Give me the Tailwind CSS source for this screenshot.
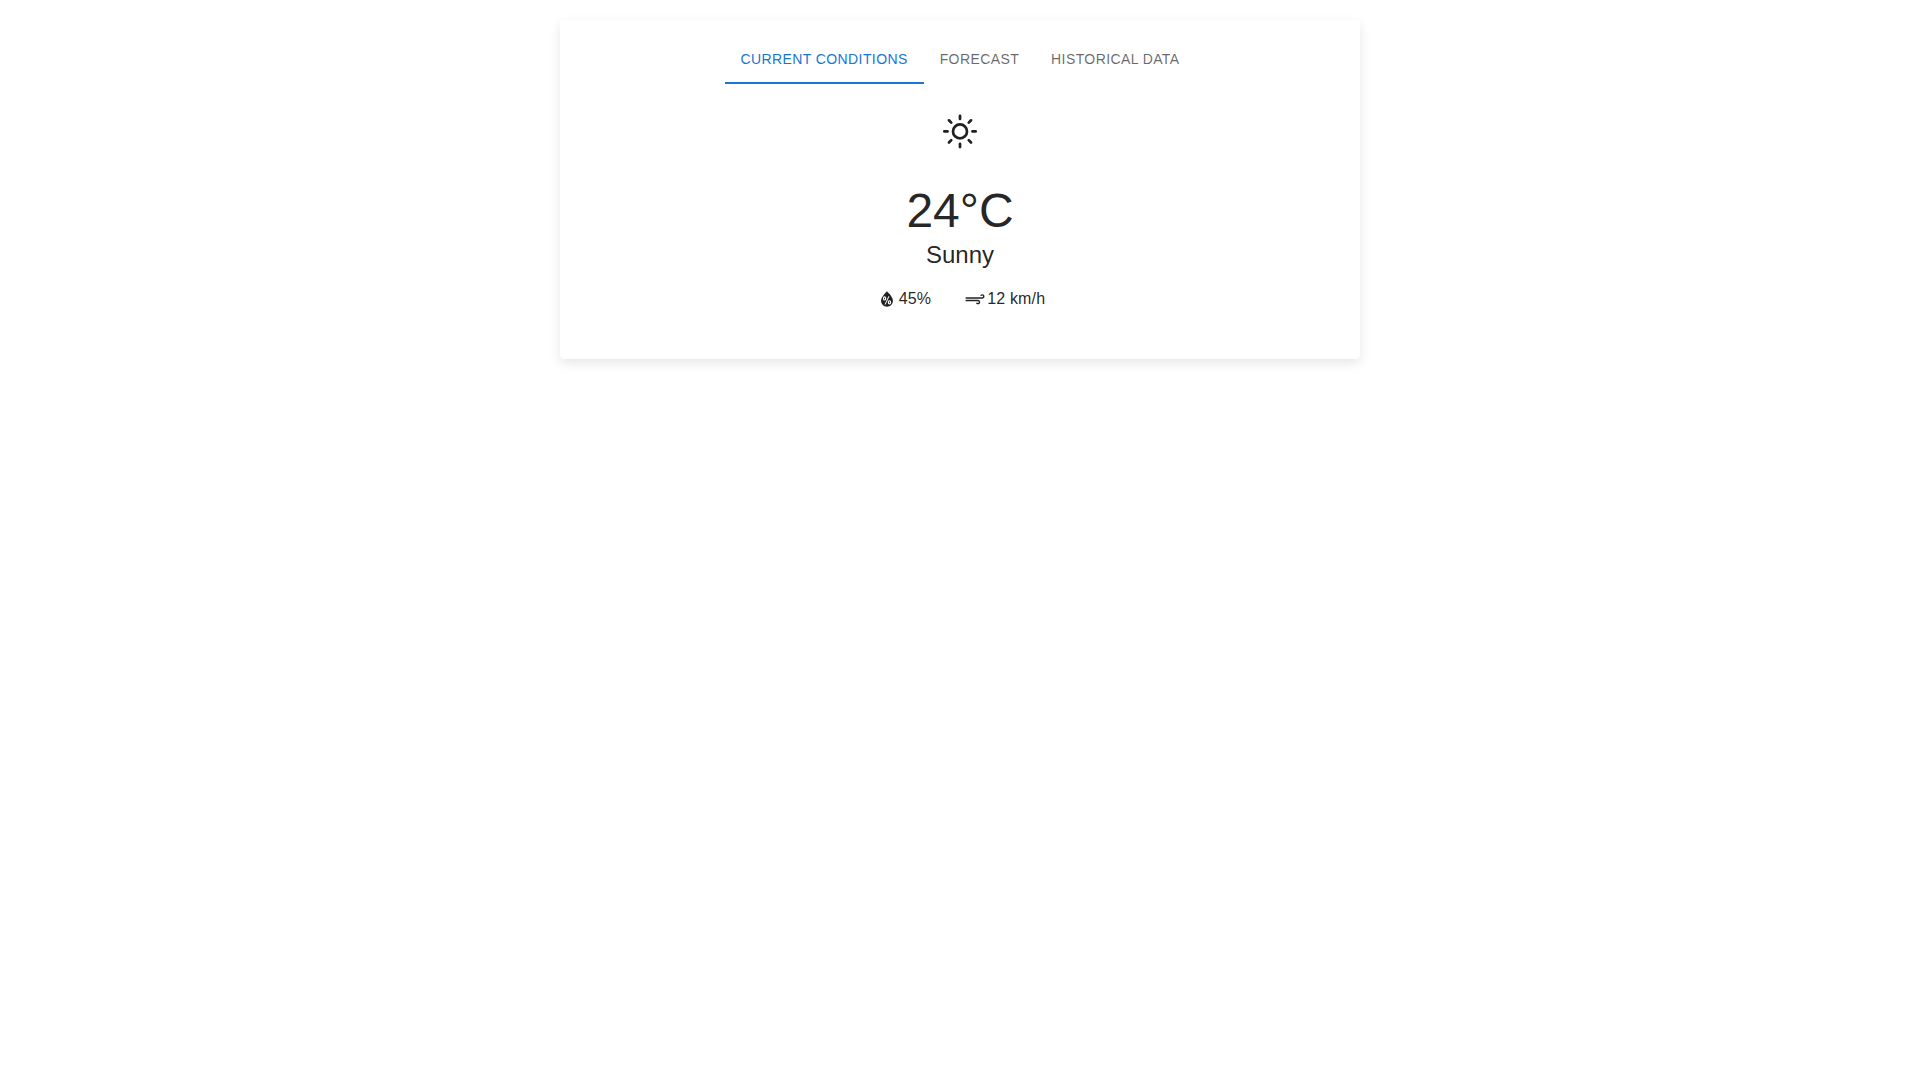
<!DOCTYPE html>
<html lang="en">
<head>
  <meta charset="UTF-8" />
  <meta name="viewport" content="width=device-width, initial-scale=1.0" />
  <title>Weather</title>
  <script src="https://cdn.jsdelivr.net/npm/@tailwindcss/browser@4"></script>
</head>
<body class="min-h-screen pt-5 bg-white font-['Liberation_Sans',Arial,sans-serif] text-black/87 antialiased">
  <div class="w-[800px] h-[339px] mx-auto p-4 rounded bg-white shadow-[0_4px_12px_rgba(0,0,0,0.1)]">

    <!-- Tabs -->
    <div class="flex justify-center h-12 text-sm leading-[17.5px] tracking-[0.02857em] text-black/60">
      <button class="px-4 border-b-2 border-[#1976d2] text-[#1976d2] pt-0.5">CURRENT CONDITIONS</button>
      <button class="px-4">FORECAST</button>
      <button class="px-4">HISTORICAL DATA</button>
    </div>

    <!-- Current conditions -->
    <div class="flex flex-col items-center pt-6">
      <svg class="size-12" viewBox="0 0 30 30" fill="none" stroke="currentColor" stroke-width="1.7" stroke-linecap="round">
        <circle cx="15" cy="14.62" r="4.37" />
        <path d="M5.22 14.62h2M22.78 14.62h2M15 4.86v2M15 22.4v2M8.1 7.7l1.43 1.44M20.47 20.1l1.43 1.44M8.1 21.54l1.43-1.44M20.47 9.14l1.43-1.44" />
      </svg>
      <h1 class="mt-[27px] text-5xl leading-14">24°C</h1>
      <h2 class="text-2xl leading-8">Sunny</h2>

      <div class="flex gap-8 mt-4 text-base leading-6 tracking-[0.00938em]">
        <div class="flex items-center">
          <svg class="size-6" viewBox="0 0 30 30" fill="currentColor">
            <path d="M7.56,17.19c0-0.88,0.24-1.89,0.72-3.03s1.1-2.25,1.86-3.31c1.56-2.06,2.92-3.62,4.06-4.67l0.75-0.72c0.25,0.26,0.53,0.5,0.83,0.72c0.41,0.42,1.04,1.11,1.88,2.09s1.57,1.85,2.17,2.65c0.71,1.01,1.32,2.1,1.81,3.25s0.74,2.16,0.74,3.03c0,1-0.19,1.95-0.58,2.86c-0.39,0.91-0.91,1.7-1.57,2.36c-0.66,0.66-1.45,1.19-2.37,1.58c-0.92,0.39-1.89,0.59-2.91,0.59c-1,0-1.95-0.19-2.86-0.57c-0.91-0.38-1.7-0.89-2.36-1.55c-0.66-0.65-1.19-1.44-1.58-2.35S7.56,18.23,7.56,17.19z" />
            <path fill="#fff" d="M11.98 22.01h1.32l4.75-10.57h-1.3z" />
            <ellipse cx="11.95" cy="14.26" rx="1.35" ry="1.98" fill="none" stroke="#fff" stroke-width="1.5" />
            <ellipse cx="18.1" cy="19.15" rx="1.35" ry="1.98" fill="none" stroke="#fff" stroke-width="1.5" />
          </svg>
          <span>45%</span>
        </div>
        <div class="flex items-center">
          <svg class="size-6" viewBox="0 0 30 30" fill="currentColor">
            <path d="M3.1,16.97c0,0.24,0.09,0.45,0.28,0.62c0.16,0.19,0.37,0.28,0.63,0.28H18.7c0.29,0,0.53,0.1,0.73,0.3c0.2,0.2,0.3,0.45,0.3,0.74c0,0.29-0.1,0.53-0.3,0.72c-0.2,0.19-0.44,0.29-0.74,0.29c-0.29,0-0.54-0.1-0.73-0.29c-0.16-0.18-0.36-0.26-0.6-0.26c-0.25,0-0.46,0.09-0.64,0.26s-0.27,0.38-0.27,0.61c0,0.25,0.09,0.46,0.28,0.63c0.56,0.55,1.22,0.83,1.96,0.83c0.78,0,1.44-0.27,1.98-0.82s0.82-1.2,0.82-1.97s-0.27-1.44-0.82-2c-0.55-0.56-1.2-0.84-1.98-0.84H4c-0.25,0-0.46,0.09-0.64,0.26C3.19,16.51,3.1,16.72,3.1,16.97z M3.1,13.69c0,0.23,0.09,0.43,0.28,0.61c0.17,0.18,0.38,0.26,0.63,0.26h20.04c0.78,0,1.45-0.27,2-0.82c0.56-0.55,0.84-1.2,0.84-1.97c0-0.77-0.28-1.44-0.84-1.99s-1.22-0.83-2-0.83c-0.77,0-1.42,0.27-1.95,0.8c-0.18,0.16-0.27,0.38-0.27,0.67c0,0.26,0.09,0.47,0.26,0.63c0.17,0.16,0.38,0.24,0.63,0.24c0.24,0,0.45-0.08,0.63-0.24c0.19-0.21,0.42-0.31,0.7-0.31c0.29,0,0.53,0.1,0.73,0.3c0.2,0.2,0.3,0.44,0.3,0.73c0,0.29-0.1,0.53-0.3,0.72c-0.2,0.19-0.44,0.29-0.73,0.29H4c-0.25,0-0.46,0.09-0.64,0.26C3.19,13.23,3.1,13.44,3.1,13.69z" />
          </svg>
          <span>12 km/h</span>
        </div>
      </div>
    </div>
  </div>
</body>
</html>
